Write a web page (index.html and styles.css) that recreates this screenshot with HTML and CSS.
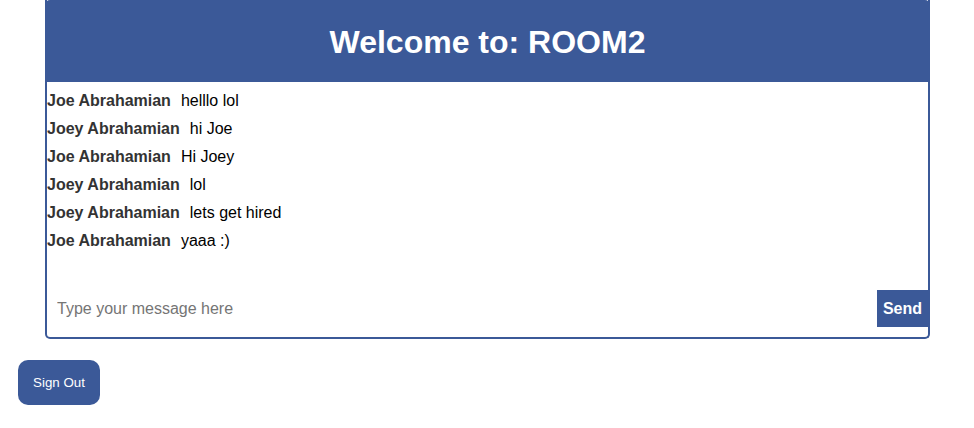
FILE: index.html
```html
<!DOCTYPE html>
<html>
<head>
<meta charset="utf-8">
<link rel="stylesheet" href="styles.css">
</head>
<body>
<div class="page">
  <div class="chat">
    <div class="chat-header"><h1 class="title">Welcome to: ROOM2</h1></div>
    <div class="messages">
      <div class="msg"><span class="name">Joe Abrahamian</span><span class="text">helllo lol</span></div>
      <div class="msg"><span class="name">Joey Abrahamian</span><span class="text">hi Joe</span></div>
      <div class="msg"><span class="name">Joe Abrahamian</span><span class="text">Hi Joey</span></div>
      <div class="msg"><span class="name">Joey Abrahamian</span><span class="text">lol</span></div>
      <div class="msg"><span class="name">Joey Abrahamian</span><span class="text">lets get hired</span></div>
      <div class="msg"><span class="name">Joe Abrahamian</span><span class="text">yaaa :)</span></div>
    </div>
    <form class="composer">
      <input class="input" type="text" placeholder="Type your message here">
      <button class="send" type="button">Send</button>
    </form>
  </div>
  <button class="signout" type="button">Sign Out</button>
</div>
</body>
</html>
```
FILE: styles.css
```css
html, body {
  margin: 0;
  padding: 0;
  background: #fff;
  font-family: "Liberation Sans", Arial, sans-serif;
}
.page {
  padding: 0 0 0 18px;
  display: flex;
  flex-direction: column;
  align-items: flex-start;
}
.chat {
  margin-left: 27px;
  width: 885px;
  box-sizing: border-box;
  border: 2px solid #3b5998;
  border-top: none;
  border-radius: 0 0 5px 5px;
}
.chat-header {
  background: #3b5998;
  margin: 0 -2px;
  height: 82px;
  border-radius: 5px 5px 0 0;
  display: flex;
  align-items: center;
  justify-content: center;
}
.title {
  margin: 0;
  color: #fff;
  font-size: 32px;
  font-weight: bold;
  line-height: 1;
  padding-top: 1px;
}
.messages {
  padding: 5px 0 0 0;
  height: 203px;
}
.msg {
  height: 28px;
  line-height: 28px;
  font-size: 16px;
  color: #000;
}
.name {
  font-weight: bold;
  color: #333;
  margin-right: 10px;
}
.composer {
  display: flex;
  margin: 0;
  padding: 0 0 10px 0;
}
.input {
  flex: 1;
  height: 37px;
  box-sizing: border-box;
  border: none;
  outline: none;
  padding: 0 10px;
  font-size: 16px;
  font-family: "Liberation Sans", Arial, sans-serif;
  background: transparent;
}
.input::placeholder {
  color: #757575;
}
.send {
  width: 51px;
  height: 37px;
  border: none;
  background: #3b5998;
  color: #fff;
  font-weight: bold;
  font-size: 16px;
  font-family: "Liberation Sans", Arial, sans-serif;
  padding: 0;
}
.signout {
  margin-top: 21px;
  width: 82px;
  height: 45px;
  border: none;
  border-radius: 10px;
  background: #3b5998;
  color: #fff;
  font-size: 13.33px;
  font-family: "Liberation Sans", Arial, sans-serif;
  padding: 0;
}
```
